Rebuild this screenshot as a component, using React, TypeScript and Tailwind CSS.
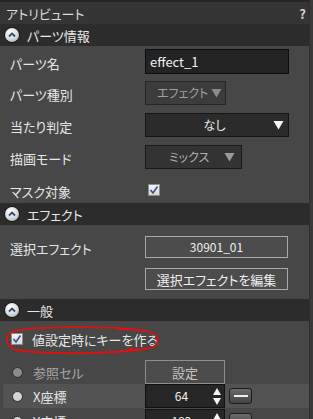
import React from "react";

const font = { fontFamily: '"Noto Sans CJK JP", "Noto Sans", sans-serif', fontFeatureSettings: '"palt"' };

function HeaderIcon() {
  return (
    <div className="w-[14px] h-[14px] rounded-full bg-[radial-gradient(circle_at_40%_30%,#ffffff,#d8d8d8_55%,#9a9a9a)] flex items-center justify-center shadow-[0_0_0_1px_#1a1a1a]">
      <svg width="8" height="6" viewBox="0 0 8 6">
        <path d="M1 4.5 L4 1.5 L7 4.5" stroke="#2c4d78" strokeWidth="1.8" fill="none" />
      </svg>
    </div>
  );
}

function SectionHeader({ title }: { title: string }) {
  return (
    <div className="h-[22px] bg-[#2c2c2c] flex items-center pl-[5px] gap-[8px] shrink-0">
      <HeaderIcon />
      <span className="text-[13px] text-[#e8e8e8] leading-none whitespace-nowrap">{title}</span>
    </div>
  );
}

function Tri({ color }: { color: string }) {
  return (
    <svg width="11" height="10" viewBox="0 0 11 10" className="shrink-0">
      <path d="M0.5 1 L10.5 1 L5.5 9.5 Z" fill={color} />
    </svg>
  );
}

function Check() {
  return (
    <div className="w-[12px] h-[12px] shrink-0 bg-[linear-gradient(#f4f4f4,#d8d8d8)] border border-[#8a8a8a] flex items-center justify-center">
      <svg width="10" height="10" viewBox="0 0 10 10">
        <path d="M1.5 5 L4 8 L8.5 1.5" stroke="#3a4f8c" strokeWidth="1.6" fill="none" />
      </svg>
    </div>
  );
}

function Label({ children, gray }: { children: React.ReactNode; gray?: boolean }) {
  return (
    <span className={`text-[13px] leading-none whitespace-nowrap ${gray ? "text-[#a8a8a8]" : "text-[#e6e6e6]"}`}>{children}</span>
  );
}

function Spinner() {
  return (
    <div className="flex flex-col gap-[3px] shrink-0">
      <svg width="8" height="7" viewBox="0 0 8 7"><path d="M0 7 L4 0 L8 7 Z" fill="#f4f4f4" /></svg>
      <svg width="8" height="7" viewBox="0 0 8 7"><path d="M0 0 L8 0 L4 7 Z" fill="#f4f4f4" /></svg>
    </div>
  );
}

export default function App() {
  return (
    <div className="w-[313px] h-[419px] overflow-hidden bg-[#474747] flex relative" style={font}>
      <div className="flex-1 flex flex-col min-w-0">
        {/* title bar */}
        <div className="h-[24px] bg-[#353535] border-t-[2px] border-[#262626] flex items-center justify-between pl-[6px] pr-[3px] shrink-0">
          <span className="text-[13px] text-[#dcdcdc] leading-none">アトリビュート</span>
          <span className="text-[13px] font-bold text-[#cfcfcf] leading-none">?</span>
        </div>

        <SectionHeader title="パーツ情報" />

        <div className="flex flex-col">
          <div className="h-[31px] flex items-center pl-[10px]">
            <div className="w-[135px]"><Label>パーツ名</Label></div>
            <div className="w-[144px] h-[25px] bg-[#232323] border border-[#0e0e0e] flex items-center pl-[4px]">
              <span className="text-[13px] text-[#f0f0f0] leading-none">effect_1</span>
            </div>
          </div>
          <div className="h-[32px] flex items-center pl-[10px]">
            <div className="w-[135px]"><Label>パーツ種別</Label></div>
            <div className="w-[81px] h-[24px] bg-[#3c3c3c] border border-[#262626] flex items-center justify-between pl-[11px] pr-[3px]">
              <span className="text-[12px] text-[#a0a0a0] leading-none whitespace-nowrap">エフェクト</span>
              <Tri color="#8c8c8c" />
            </div>
          </div>
          <div className="h-[32px] flex items-center pl-[10px]">
            <div className="w-[135px]"><Label>当たり判定</Label></div>
            <div className="w-[144px] h-[24px] bg-[#2b2b2b] border border-[#151515] flex items-center pr-[4px]">
              <span className="flex-1 text-center text-[12px] text-[#ececec] leading-none pl-[10px]">なし</span>
              <Tri color="#f4f4f4" />
            </div>
          </div>
          <div className="h-[32px] flex items-center pl-[10px]">
            <div className="w-[135px]"><Label>描画モード</Label></div>
            <div className="w-[97px] h-[24px] bg-[#333333] border border-[#1a1a1a] flex items-center pr-[6px]">
              <span className="flex-1 text-center text-[12px] text-[#b0b0b0] leading-none pl-[8px] whitespace-nowrap">ミックス</span>
              <Tri color="#9a9a9a" />
            </div>
          </div>
          <div className="h-[30px] flex items-center pl-[10px] pt-[3px]">
            <div className="w-[138px]"><Label>マスク対象</Label></div>
            <Check />
          </div>
        </div>

        <SectionHeader title="エフェクト" />

        <div className="flex flex-col pt-[11px] pb-[9px] gap-[10px]">
          <div className="h-[22px] flex items-center pl-[10px]">
            <div className="w-[135px]"><Label>選択エフェクト</Label></div>
            <div className="w-[143px] h-[22px] bg-[#4c4c4c] border border-[#a8a8a8] flex items-center justify-center">
              <span className="text-[12px] text-[#efefef] leading-none">30901_01</span>
            </div>
          </div>
          <div className="h-[22px] flex items-center pl-[145px]">
            <div className="w-[143px] h-[22px] bg-[#4c4c4c] border border-[#a8a8a8] flex items-center justify-center">
              <span className="text-[13px] text-[#efefef] leading-none whitespace-nowrap">選択エフェクトを編集</span>
            </div>
          </div>
        </div>

        <SectionHeader title="一般" />

        <div className="flex flex-col">
          <div className="h-[36px] flex items-center pl-[11px] gap-[9px]">
            <Check />
            <Label>値設定時にキーを作る</Label>
          </div>
          <div className="h-[27px] flex items-end pl-[12px]">
            <div className="w-[133px] h-[23px] flex items-center gap-[10px]">
              <div className="w-[11px] h-[11px] rounded-full bg-[#8a8a8a] border border-[#2a2a2a]" />
              <Label gray>参照セル</Label>
            </div>
            <div className="w-[80px] h-[24px] bg-[#4c4c4c] border border-[#8e8e8e] flex items-center justify-center">
              <span className="text-[13px] text-[#c4c4c4] leading-none">設定</span>
            </div>
          </div>
          <div className="h-[24px] flex items-center bg-[#535353] ml-[3px] pl-[9px]">
            <div className="w-[133px] flex items-center gap-[10px]">
              <div className="w-[11px] h-[11px] rounded-full bg-[#d4d4d4] border border-[#2a2a2a]" />
              <Label>X座標</Label>
            </div>
            <div className="w-[80px] h-[24px] bg-[#262626] border border-[#111] flex items-center pr-[3px]">
              <span className="flex-1 text-center text-[12px] text-[#f0f0f0] leading-none pl-[4px]">64</span>
              <Spinner />
            </div>
            <div className="ml-[4px] w-[23px] h-[16px] rounded-[3px] bg-[linear-gradient(#6a6a6a,#444)] border border-[#1c1c1c] flex items-center justify-center">
              <div className="w-[14px] h-[2px] bg-[#eeeeee]" />
            </div>
          </div>
          <div className="h-[24px] mt-[1px] flex items-center ml-[3px] pl-[9px]">
            <div className="w-[133px] flex items-center gap-[10px]">
              <div className="w-[11px] h-[11px] rounded-full bg-[#d4d4d4] border border-[#2a2a2a]" />
              <Label>Y座標</Label>
            </div>
            <div className="w-[80px] h-[24px] bg-[#262626] border border-[#111] flex items-center pr-[3px]">
              <span className="flex-1 text-center text-[12px] text-[#f0f0f0] leading-none pl-[4px]">192</span>
              <Spinner />
            </div>
            <div className="ml-[4px] w-[23px] h-[16px] rounded-[3px] bg-[linear-gradient(#6a6a6a,#444)] border border-[#1c1c1c]" />
          </div>
        </div>
      </div>
      <div className="w-[4px] bg-[#3a3a3a] border-l border-[#2e2e2e] shrink-0" />

      {/* red annotation ellipse */}
      <svg className="absolute left-0 top-[324px] pointer-events-none" width="165" height="32" viewBox="0 0 165 32">
        <path
          d="M140 6 C110 2, 40 2, 14 7 C4 10, 4 22, 16 26 C50 31, 120 30, 150 24 C160 21, 160 12, 150 8 C140 5, 125 5, 118 5 M128 24 C134 26, 140 26, 146 25"
          stroke="#e01010"
          strokeWidth="1.8"
          fill="none"
          strokeLinecap="round"
        />
      </svg>
    </div>
  );
}
